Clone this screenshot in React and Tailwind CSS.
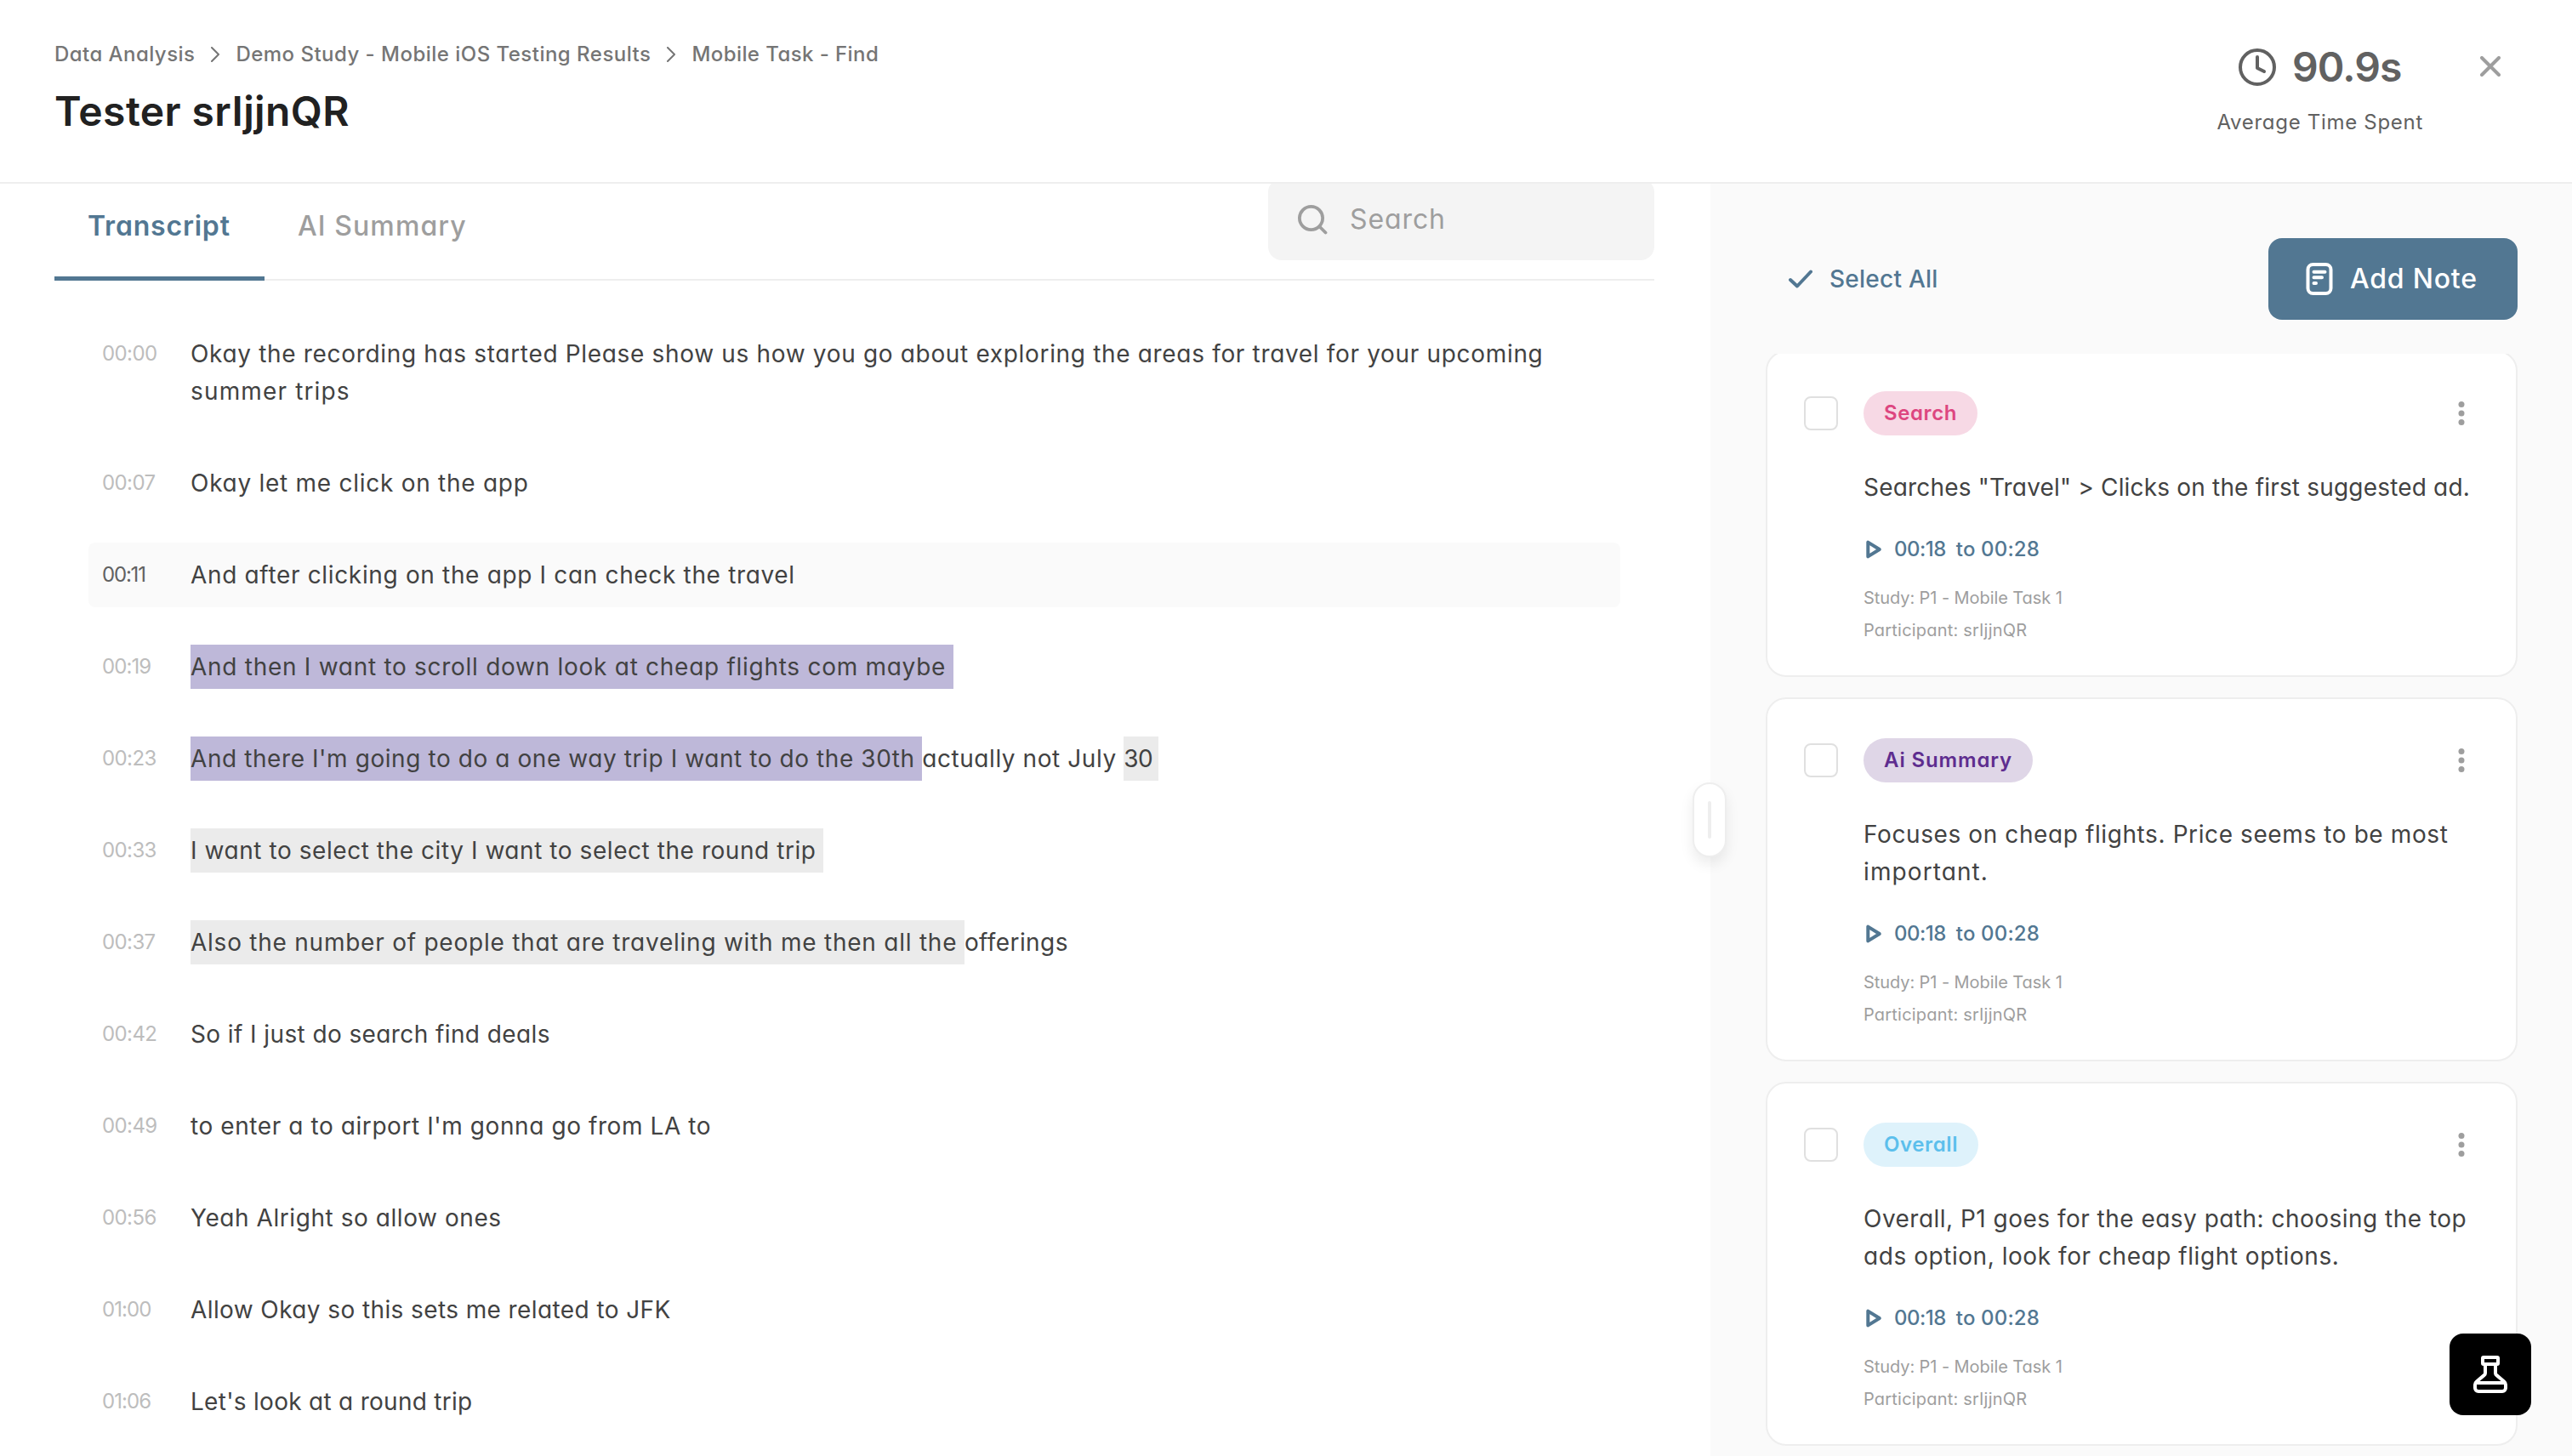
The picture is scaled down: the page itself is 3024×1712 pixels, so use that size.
const crumbs = [
  { label: 'Data Analysis', cls: 'tracking-[0.45px]' },
  { label: 'Demo Study - Mobile iOS Testing Results', cls: 'tracking-[0.48px]' },
  { label: 'Mobile Task - Find', cls: 'tracking-[0.42px]' },
]

const markCls = {
  note: 'whitespace-pre bg-[#beb8d9] py-[9px]',
  select: 'whitespace-pre bg-[#ebebeb] py-[9px]',
}

const transcript = [
  {
    time: '00:00',
    parts: [
      {
        text: 'Okay the recording has started Please show us how you go about exploring the areas for travel for your upcoming ',
        cls: 'tracking-[0.67px]',
      },
      { text: 'summer trips', cls: 'tracking-[1.15px]' },
    ],
  },
  { time: '00:07', parts: [{ text: 'Okay let me click on the app', cls: 'tracking-[0.73px]' }] },
  {
    time: '00:11',
    timeCls: 'tracking-[-1.2px]',
    active: true,
    parts: [{ text: 'And after clicking on the app I can check the travel', cls: 'tracking-[0.66px]' }],
  },
  {
    time: '00:19',
    timeCls: 'tracking-[-0.9px]',
    parts: [
      { text: 'And then I want to scroll down look at cheap flights com maybe ', mark: 'note', cls: 'tracking-[0.72px]' },
    ],
  },
  {
    time: '00:23',
    parts: [
      { text: "And there I'm going to do a one way trip I want to do the 30th ", mark: 'note', cls: 'tracking-[0.58px]' },
      { text: 'actually not July ', cls: 'tracking-[0.57px]' },
      { text: '30 ', mark: 'select', cls: 'tracking-[-0.6px]' },
    ],
  },
  {
    time: '00:33',
    parts: [
      { text: 'I want to select the city I want to select the round trip ', mark: 'select', cls: 'tracking-[0.56px]' },
    ],
  },
  {
    time: '00:37',
    parts: [
      { text: 'Also the number of people that are traveling with me then all the ', mark: 'select', cls: 'tracking-[0.76px]' },
      { text: 'offerings', cls: 'tracking-[0.42px]' },
    ],
  },
  { time: '00:42', parts: [{ text: 'So if I just do search find deals', cls: 'tracking-[0.4px]' }] },
  { time: '00:49', parts: [{ text: "to enter a to airport I'm gonna go from LA to", cls: 'tracking-[0.58px]' }] },
  { time: '00:56', parts: [{ text: 'Yeah Alright so allow ones', cls: 'tracking-[0.56px]' }] },
  {
    time: '01:00',
    timeCls: 'tracking-[-0.9px]',
    parts: [{ text: 'Allow Okay so this sets me related to JFK', cls: 'tracking-[0.4px]' }],
  },
  {
    time: '01:06',
    timeCls: 'tracking-[-0.9px]',
    parts: [{ text: "Let's look at a round trip", cls: 'tracking-[0.28px]' }],
  },
]

const notes = [
  {
    tag: 'Search',
    tagCls: 'bg-[#f7d9e5] text-[#dd4680] tracking-[0.6px]',
    lines: [{ text: 'Searches "Travel" > Clicks on the first suggested ad.', cls: 'tracking-[0.18px]' }],
  },
  {
    tag: 'Ai Summary',
    tagCls: 'bg-[#dfd6e7] text-[#5e2d8f] tracking-[0.87px]',
    lines: [
      { text: 'Focuses on cheap flights. Price seems to be most', cls: 'tracking-[0.6px]' },
      { text: 'important.', cls: 'tracking-[1.1px]' },
    ],
  },
  {
    tag: 'Overall',
    tagCls: 'bg-[#def2fb] text-[#5cbfec] tracking-[0.6px]',
    lines: [
      { text: 'Overall, P1 goes for the easy path: choosing the top', cls: 'tracking-[0.48px]' },
      { text: 'ads option, look for cheap flight options.', cls: 'tracking-[0.55px]' },
    ],
  },
]

function Header() {
  return (
    <header className="flex h-[216px] flex-shrink-0 items-start justify-between border-b-2 border-[#eeeeee] pr-[84px] pl-16">
      <div className="pt-[46px]">
        <nav className="flex items-center text-2xl/[36px] font-medium text-[#757575]">
          {crumbs.map((c, i) => (
            <div key={c.label} className="flex items-center">
              {i > 0 && (
                <svg className="mx-[18px] h-[18px] w-3" viewBox="0 0 12 18" fill="none" stroke="currentColor" strokeWidth="2">
                  <path d="M2 1l8 8-8 8" strokeLinecap="round" strokeLinejoin="round" />
                </svg>
              )}
              <span className={c.cls}>{c.label}</span>
            </div>
          ))}
        </nav>
        <h1 className="mt-[13px] text-[48px]/[72px] font-semibold tracking-[0.4px] text-[#212121]">Tester srIjjnQR</h1>
      </div>

      <div className="flex items-start gap-[67px] text-[#616161]">
        <div className="flex flex-col items-center pt-[49px]">
          <div className="flex h-[60px] items-center gap-[19px]">
            <svg className="h-11 w-11" viewBox="0 0 44 44" fill="none" stroke="currentColor" strokeWidth="4">
              <circle cx="22" cy="22" r="20" />
              <path d="M22 10v13l8 4" strokeLinecap="round" strokeLinejoin="round" />
            </svg>
            <span className="text-[48px] font-semibold tracking-[-0.9px]">90.9s</span>
          </div>
          <div className="mt-[17px] text-2xl/[36px] tracking-[0.7px]">Average Time Spent</div>
        </div>
        <svg className="mt-[66px] h-6 w-6 text-[#9e9e9e]" viewBox="0 0 24 24" fill="none" stroke="currentColor" strokeWidth="4">
          <path d="M2 2l20 20M22 2L2 22" strokeLinecap="round" />
        </svg>
      </div>
    </header>
  )
}

function Tabs() {
  return (
    <div className="flex h-[114px] items-start justify-between border-b-2 border-[#eeeeee] text-[32px]/[100px]">
      <div className="flex h-full">
        <div className="h-[114px] w-[247px] border-b-[5px] border-[#527792] pl-[39px] font-semibold tracking-[0.8px] text-[#527792]">
          Transcript
        </div>
        <div className="px-[39px] font-medium tracking-[1.1px] text-[#9e9e9e]">AI Summary</div>
      </div>
      <div className="-mt-1.5 flex h-24 w-[454px] items-center gap-[26px] rounded-2xl bg-[#f4f4f4] pl-[35px] text-[#9e9e9e]">
        <svg className="h-[35px] w-[35px]" viewBox="0 0 35 35" fill="none" stroke="currentColor" strokeWidth="3.8">
          <circle cx="15.5" cy="15.5" r="13.6" />
          <path d="M25.5 25.5l7 7" strokeLinecap="round" />
        </svg>
        <span className="tracking-[0.9px]">Search</span>
      </div>
    </div>
  )
}

function TranscriptRow({ row }) {
  return (
    <div className={`flex rounded-lg px-4 py-4 text-[28px]/[44px] ${row.active ? 'bg-[#fafafa]' : ''}`}>
      <span
        className={`w-[104px] flex-shrink-0 text-2xl/[44px] ${row.timeCls || 'tracking-[-0.6px]'} ${row.active ? 'text-[#616161]' : 'text-[#bdbdbd]'}`}
      >
        {row.time}
      </span>
      <p className="flex-1 text-[#424242]">
        {row.parts.map((p) => (
          <span key={p.text} className={`${p.cls} ${p.mark ? markCls[p.mark] : ''}`}>
            {p.text}
          </span>
        ))}
      </p>
    </div>
  )
}

function NoteCard({ note }) {
  return (
    <article className="flex-shrink-0 rounded-3xl border-2 border-[#eeeeee] bg-white pt-[46px] pr-[60px] pb-[34px] pl-[43px]">
      <div className="flex items-center">
        <span className="h-10 w-10 rounded-lg border-2 border-[#e0e0e0]" />
        <span className={`ml-[30px] rounded-full px-6 text-2xl/[52px] font-semibold ${note.tagCls}`}>{note.tag}</span>
        <svg className="ml-auto h-7 w-2" viewBox="0 0 8 28" fill="#9e9e9e">
          <circle cx="4" cy="3.5" r="3.5" />
          <circle cx="4" cy="14" r="3.5" />
          <circle cx="4" cy="24.5" r="3.5" />
        </svg>
      </div>
      <div className="pl-[70px]">
        <p className="mt-[39px] text-[28px]/[44px] whitespace-nowrap text-[#424242]">
          {note.lines.map((l) => (
            <span key={l.text} className={`block ${l.cls}`}>
              {l.text}
            </span>
          ))}
        </p>
        <div className="mt-[33px] flex h-9 items-center gap-3 text-2xl/[36px] font-medium text-[#527792]">
          <svg className="h-6 w-6" viewBox="0 0 24 24" fill="none" stroke="currentColor" strokeWidth="4">
            <path d="M5.3 3.6v16.8L18.8 12z" strokeLinejoin="round" />
          </svg>
          <span className="tracking-[-0.5px]">00:18</span>
          <span className="tracking-[0.15px]">to 00:28</span>
        </div>
        <div className="mt-5 text-xl/[38px] text-[#9e9e9e]">
          <div className="tracking-[-0.08px]">Study: P1 - Mobile Task 1</div>
          <div className="tracking-[0.2px]">Participant: srIjjnQR</div>
        </div>
      </div>
    </article>
  )
}

function NotesPanel() {
  return (
    <aside className="relative flex w-[1013px] flex-col bg-[#fafafa] pt-16 pr-16 pl-[65px]">
      <div className="absolute top-1/2 -left-[21px] flex h-[88px] w-10 -translate-y-1/2 items-center justify-center rounded-full border-2 border-[#eeeeee] bg-white shadow-[0_8px_16px_rgba(0,0,0,0.08)]">
        <span className="h-11 w-1 rounded-full bg-[#eeeeee]" />
      </div>

      <div className="flex h-24 flex-shrink-0 items-center justify-between font-medium">
        <div className="flex items-center gap-5 pl-[27px] text-[28px] tracking-[0.25px] text-[#527792]">
          <svg className="h-[22px] w-[28px]" viewBox="0 0 28 22" fill="none" stroke="currentColor" strokeWidth="4">
            <path d="M2 12l8 7.5L26 2.5" strokeLinecap="round" strokeLinejoin="round" />
          </svg>
          Select All
        </div>
        <button className="flex h-24 w-[293px] items-center gap-5 rounded-2xl bg-[#527792] pl-11 text-[32px] tracking-[0.8px] text-white">
          <svg className="h-[38px] w-8" viewBox="0 0 32 38" fill="none" stroke="currentColor" strokeWidth="4">
            <rect x="2.5" y="2" width="27" height="34" rx="6" />
            <path d="M9.5 10.7h13M9.5 17.3h9.5M9.5 24h2.5" strokeLinecap="round" />
          </svg>
          Add Note
        </button>
      </div>

      <div className="mt-10 min-h-0 flex-1 overflow-hidden">
        <div className="-mt-1 flex flex-col gap-6">
          {notes.map((n) => (
            <NoteCard key={n.tag} note={n} />
          ))}
        </div>
      </div>
    </aside>
  )
}

export default function App() {
  return (
    <div className="relative flex h-[1712px] w-[3024px] flex-col overflow-hidden bg-white font-[Inter,'Liberation_Sans',sans-serif] [font-feature-settings:'cv11']">
      <Header />
      <main className="flex min-h-0 flex-1 overflow-hidden">
        <section className="flex-1 pr-[66px] pl-16">
          <Tabs />
          <div className="mx-10 mt-12 flex flex-col gap-8">
            {transcript.map((row) => (
              <TranscriptRow key={row.time} row={row} />
            ))}
          </div>
        </section>
        <NotesPanel />
      </main>

      <button className="absolute right-12 bottom-12 flex h-24 w-24 items-center justify-center rounded-2xl bg-black text-white">
        <svg className="h-11 w-10" viewBox="0 0 40 44" fill="none" stroke="currentColor" strokeWidth="4" strokeLinejoin="round">
          <rect x="11" y="2" width="18" height="8" rx="1" />
          <path d="M14 10v10.5c0 1-.4 1.8-1.2 2.4l-9 7.6C2.600 31.500 2 32.500 2 34v4a4 4 0 0 0 4 4h28a4 4 0 0 0 4-4v-4c0-1.500-.6-2.500-1.800-3.500l-9-7.600c-.8-.6-1.200-1.400-1.200-2.400V10M4 32h32" />
        </svg>
      </button>
    </div>
  )
}
